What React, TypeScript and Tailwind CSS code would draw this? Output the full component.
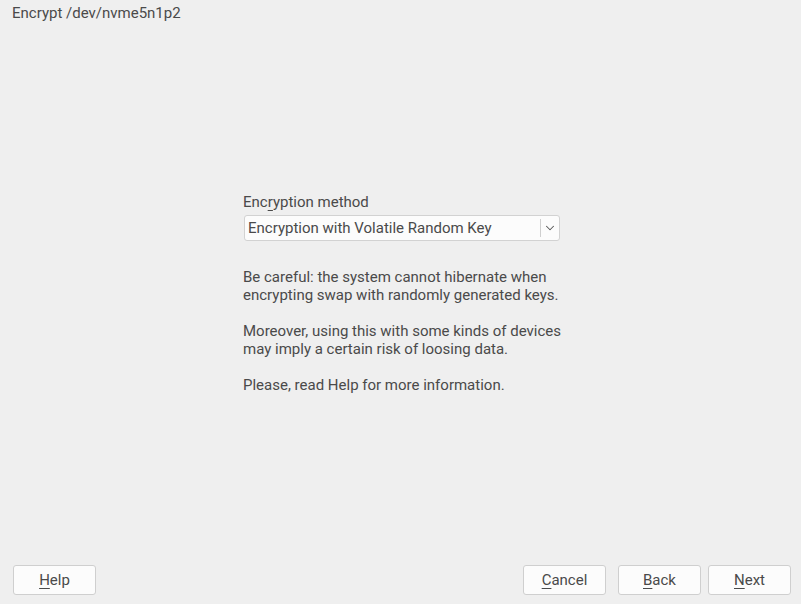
import { ChevronDown } from "lucide-react";

function Btn({ mn, rest }: { mn: string; rest: string }) {
  return (
    <button className="w-[83px] h-[30px] rounded-[3px] border border-[#cfcfcf] bg-[#fcfcfc] text-[15px] text-[#4a4a4a] leading-none flex items-center justify-center">
      <span>
        <span className="underline underline-offset-[3px]">{mn}</span>
        {rest}
      </span>
    </button>
  );
}

export default function App() {
  return (
    <div
      className="w-[801px] h-[604px] bg-[#efefef] text-[#4a4a4a] flex flex-col text-[15px] leading-[18px]"
      style={{ fontFamily: "Roboto, 'Noto Sans', sans-serif" }}
    >
      <div className="px-3 pt-[4px]">Encrypt /dev/nvme5n1p2</div>

      <div className="flex-1 flex items-center justify-center">
        <div className="w-[315px] flex flex-col whitespace-nowrap">
          <div>
            Enc<span className="underline underline-offset-[3px]">r</span>yption method
          </div>
          <div className="mt-[4px] ml-[1px] -mr-[2px] h-[26px] rounded-[3px] border border-[#d2d2d2] bg-[#fcfcfc] flex items-center">
            <span className="flex-1 pl-[3px]">Encryption with Volatile Random Key</span>
            <span className="w-px h-[18px] bg-[#cfcfcf]" />
            <span className="w-[18px] flex items-center justify-center">
              <ChevronDown size={14} strokeWidth={1.75} className="text-[#555]" />
            </span>
          </div>
          <div className="mt-[27px] flex flex-col gap-[18px]">
            <p>
              Be careful: the system cannot hibernate when
              <br />
              encrypting swap with randomly generated keys.
            </p>
            <p>
              Moreover, using this with some kinds of devices
              <br />
              may imply a certain risk of loosing data.
            </p>
            <p>Please, read Help for more information.</p>
          </div>
        </div>
      </div>

      <div className="flex items-center pl-[13px] pr-[10px] pb-[9px]">
        <Btn mn="H" rest="elp" />
        <div className="flex-1" />
        <Btn mn="C" rest="ancel" />
        <div className="w-[12px]" />
        <Btn mn="B" rest="ack" />
        <div className="w-[7px]" />
        <Btn mn="N" rest="ext" />
      </div>
    </div>
  );
}
